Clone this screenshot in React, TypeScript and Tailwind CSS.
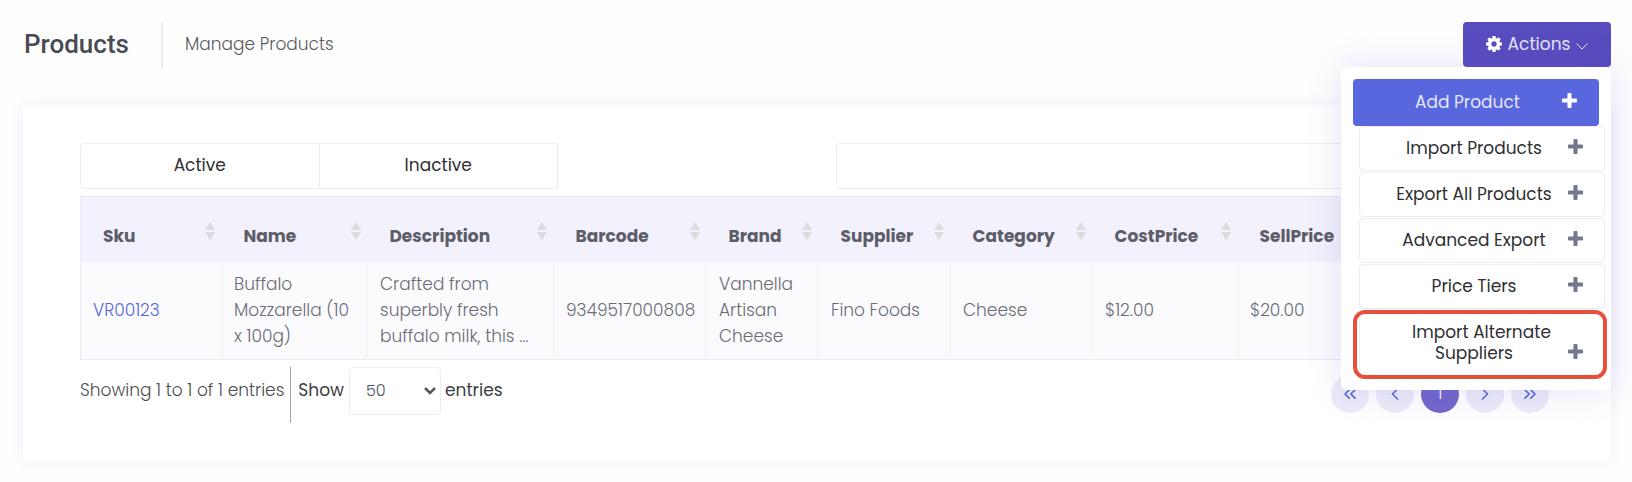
import { ChevronLeft, ChevronRight, ChevronsLeft, ChevronsRight } from "lucide-react";

const columns = [
  { title: "Sku", width: "w-[141px]" },
  { title: "Name", width: "w-[146px]" },
  { title: "Description", width: "w-[186px]" },
  { title: "Barcode", width: "w-[153px]" },
  { title: "Brand", width: "w-[112px]" },
  { title: "Supplier", width: "w-[132px]" },
  { title: "Category", width: "w-[142px]" },
  { title: "CostPrice", width: "w-[145px]" },
  { title: "SellPrice", width: "" },
];

const row = [
  "Buffalo Mozzarella (10 x 100g)",
  "Crafted from superbly fresh buffalo milk, this ...",
  "9349517000808",
  "Vannella Artisan Cheese",
  "Fino Foods",
  "Cheese",
  "$12.00",
  "$20.00",
];

const menuItems = [
  ["Import Products"],
  ["Export All Products"],
  ["Advanced Export"],
  ["Price Tiers"],
];

function SortIcon() {
  return (
    <svg width="10" height="18" viewBox="0 0 10 18" fill="#dcdcde" className="mb-3">
      <path d="M5 0l5 8H0z" />
      <path d="M0 10h10l-5 8z" />
    </svg>
  );
}

function CogIcon() {
  return (
    <svg viewBox="0 128 1536 1536" fill="currentColor" className="mb-0.5 mr-1.5 size-4 text-white">
      <path d="M1024 896q0-106-75-181t-181-75-181 75-75 181 75 181 181 75 181-75 75-181zm512-109v222q0 12-8 23t-20 13l-185 28q-19 54-39 91 35 50 107 138 10 12 10 25t-9 23q-27 37-99 108t-94 71q-12 0-26-9l-138-108q-44 23-91 38-16 136-29 186-7 28-36 28h-222q-14 0-24.500-8.500t-11.500-21.500l-28-184q-49-16-90-37l-141 107q-10 9-25 9-14 0-25-11-126-114-165-168-7-10-7-23 0-12 8-23 15-21 51-66.500t54-70.500q-27-50-41-99l-183-27q-13-2-21-12.500t-8-23.500v-222q0-12 8-23t19-13l186-28q14-46 39-92-40-57-107-138-10-12-10-24 0-10 9-23 26-36 98.500-107.500t94.500-71.500q13 0 26 10l138 107q44-23 91-38 16-136 29-186 7-28 36-28h222q14 0 24.500 8.500t11.500 21.500l28 184q49 16 90 37l142-107q9-9 24-9 13 0 25 10 129 119 165 170 7 8 7 22 0 12-8 23-15 21-51 66.500t-54 70.500q26 50 41 98l183 28q13 2 21 12.500t8 23.500z" />
    </svg>
  );
}

function PlusIcon({ className }: { className: string }) {
  return (
    <svg viewBox="0 0 1408 1408" width="15" height="15" fill="currentColor" className={className}>
      <path d="M1408 608v192q0 40-28 68t-68 28h-416v416q0 40-28 68t-68 28h-192q-40 0-68-28t-28-68v-416h-416q-40 0-68-28t-28-68v-192q0-40 28-68t68-28h416v-416q0-40 28-68t68-28h192q40 0 68 28t28 68v416h416q40 0 68 28t28 68z" />
    </svg>
  );
}

function MenuItem({ lines, primary = false }: { lines: string[]; primary?: boolean }) {
  const last = lines.length - 1;
  return (
    <button
      type="button"
      className={
        primary
          ? "block w-[246px] rounded bg-[#5867dd] py-[13px] pl-5 pr-[22px] text-[17px] font-normal leading-[21px] text-[#e4e6fa]"
          : "ml-[6px] block w-[246px] rounded border border-[#ebedf2] bg-white py-[11px] pl-5 pr-[21px] text-[17px] font-normal leading-[21px] text-[#2f2f33]"
      }
    >
      {lines.slice(0, last).map((line) => (
        <span key={line} className="block text-center">
          {line}
        </span>
      ))}
      <span className="flex items-center">
        <span className="flex-1 text-center">{lines[last]}</span>
        <PlusIcon className={primary ? "mb-1 text-white" : "mb-1 text-[#74788d]"} />
      </span>
    </button>
  );
}

function ActionsMenu() {
  return (
    <div className="absolute right-0 top-full z-10 flex w-[270px] flex-col gap-px rounded-md bg-white pb-[11px] pl-3 pt-3 shadow-[0_0_36px_0_rgba(82,63,185,0.15)]">
      <div className="-mb-px">
        <MenuItem lines={["Add Product"]} primary />
      </div>
      {menuItems.map((lines) => (
        <MenuItem key={lines[0]} lines={lines} />
      ))}
      <div className="relative pb-[3px]">
        <MenuItem lines={["Import Alternate", "Suppliers"]} />
        <div className="pointer-events-none absolute left-0 top-0 h-[69px] w-[254px] rounded-xl border-4 border-[#e5503c]" />
      </div>
    </div>
  );
}

const pageButton =
  "flex size-[38px] items-center justify-center rounded-full bg-[#ecebf9] text-[#5867dd]";

export default function App() {
  return (
    <div className="min-h-screen bg-[#fefefe] pb-5 pl-[23px] pr-[21px] pt-[22px] font-['Poppins','Inter',sans-serif] text-[17px] font-light text-[#4c4c52]">
      {/* header */}
      <header className="flex h-[45px] items-center">
        <h1 className="pl-px font-['Roboto',sans-serif] text-[26px] font-medium text-[#4a4a55]">
          Products
        </h1>
        <span className="ml-8 h-[46px] w-[2px] bg-[#ebebf5]" />
        <span className="ml-[22px] text-[#5a5a5f]">Manage Products</span>
        <div className="relative ml-auto">
          <button
            type="button"
            className="flex h-[45px] w-[148px] items-center justify-center rounded bg-[#584dbf] font-normal text-[#e6e4f8]"
          >
            <CogIcon />
            Actions
            <svg width="12" height="7" viewBox="0 0 12 7" fill="none" stroke="currentColor" className="ml-1.5 mt-1">
              <path d="M0.500 0.500l5.500 5.500 5.500-5.500" />
            </svg>
          </button>
          <ActionsMenu />
        </div>
      </header>

      {/* products card */}
      <main className="mt-[38px] bg-white px-[57px] pb-[38px] pt-[38px] shadow-[0_0_13px_0_rgba(82,63,205,0.08)]">
        <div className="flex items-center justify-between">
          <div className="flex h-[46px] w-[478px] rounded-l border border-[#ebedf2] font-normal text-[#2f2f33]">
            <button type="button" className="flex-1 border-r border-[#ebedf2]">
              Active
            </button>
            <button type="button" className="flex-1">
              Inactive
            </button>
          </div>
          <input
            type="search"
            aria-label="Search products"
            className="h-[46px] w-[718px] rounded border border-[#ebedf2] px-4 outline-none"
          />
        </div>

        <table className="mt-[7px] w-full table-fixed border-collapse border border-[#ebe9f8]">
          <thead>
            <tr className="h-[65px] bg-[#f3f1fb]">
              {columns.map((col) => (
                <th key={col.title} className={`${col.width} pb-0 pl-[22px] pr-[7px] pt-[15px] text-left`}>
                  <span className="flex items-center justify-between font-bold text-[#5c5d69]">
                    {col.title}
                    <SortIcon />
                  </span>
                </th>
              ))}
            </tr>
          </thead>
          <tbody>
            <tr className="h-[98px] bg-[#fbfbfe] leading-[26px] text-[#6b6c77]">
              <td className="pb-px pl-3">
                <a href="#sku" className="text-[#5867dd]">
                  VR00123
                </a>
              </td>
              {row.map((cell, i) => (
                <td key={i} className="border-l border-[#f3f3f8] pb-px pl-3 pr-2">
                  {cell}
                </td>
              ))}
            </tr>
          </tbody>
        </table>

        <div className="mt-[7px] flex items-start">
          <p className="pt-[11px] leading-6">Showing 1 to 1 of 1 entries</p>
          <label className="ml-[6px] flex h-14 items-start border-l border-[#a4a4a8] pl-[7px] font-normal text-[#3d3d42]">
            <span className="pt-[11px] leading-6">Show</span>
            <span className="relative ml-[5px] mr-1">
              <select
                defaultValue="50"
                className="h-[48px] w-[92px] appearance-none rounded border border-[#ebedf2] bg-white pl-4 text-base font-light text-[#4f5060]"
              >
                <option>10</option>
                <option>25</option>
                <option>50</option>
                <option>100</option>
              </select>
              <svg
                width="12"
                height="8"
                viewBox="0 0 12 8"
                fill="none"
                stroke="#55565f"
                strokeWidth="2.5"
                className="pointer-events-none absolute right-[5px] top-5"
              >
                <path d="M1 1l5 5 5-5" />
              </svg>
            </span>
            <span className="pt-[11px] leading-6">entries</span>
          </label>

          <nav aria-label="Pagination" className="ml-auto mr-[5px] flex gap-[7px] pt-2">
            <button type="button" aria-label="First page" className={pageButton}>
              <ChevronsLeft className="size-5" />
            </button>
            <button type="button" aria-label="Previous page" className={pageButton}>
              <ChevronLeft className="size-5" />
            </button>
            <button
              type="button"
              className="flex size-[38px] items-center justify-center rounded-full bg-[#7368ca] text-white"
            >
              1
            </button>
            <button type="button" aria-label="Next page" className={pageButton}>
              <ChevronRight className="size-5" />
            </button>
            <button type="button" aria-label="Last page" className={pageButton}>
              <ChevronsRight className="size-5" />
            </button>
          </nav>
        </div>
      </main>
    </div>
  );
}
